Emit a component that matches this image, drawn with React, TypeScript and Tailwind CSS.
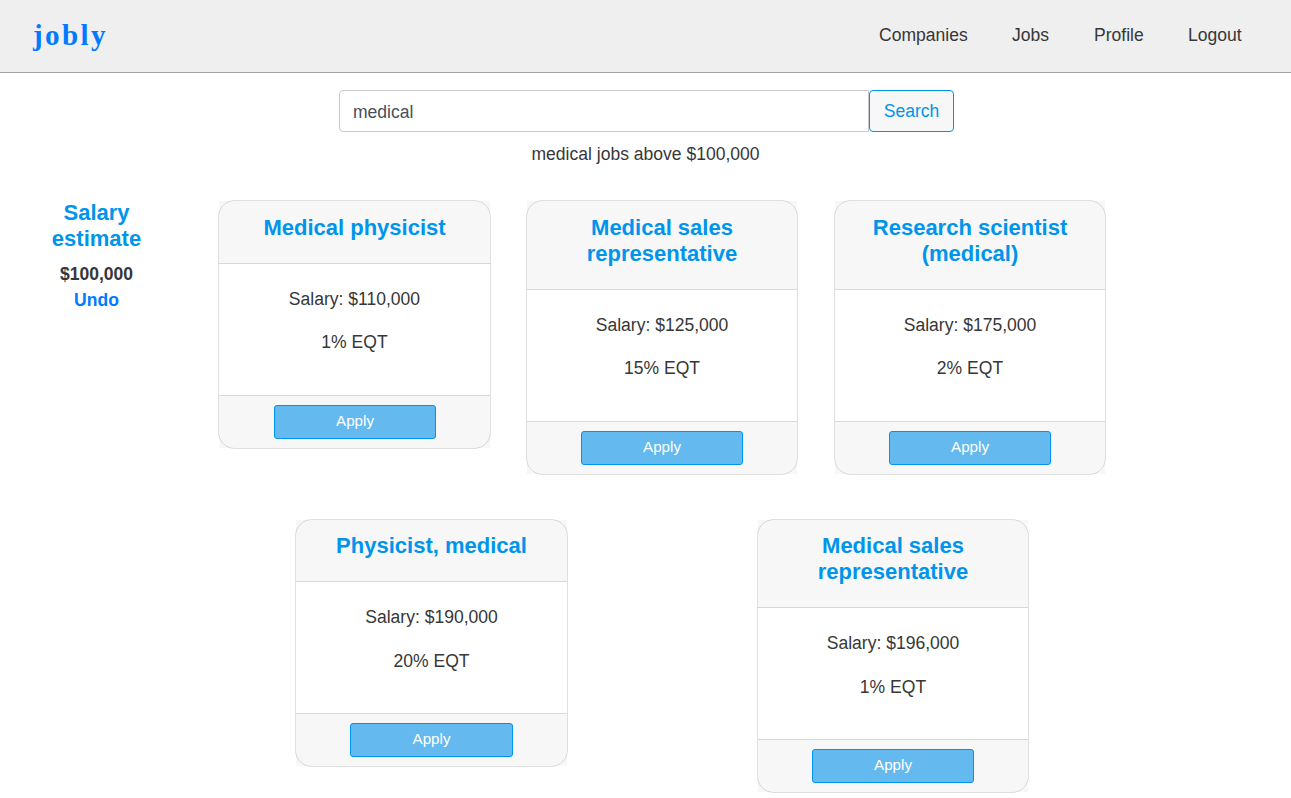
import { useState } from "react";

type Job = { title: string; salary: string; equity: string };

const firstRow: Job[] = [
  { title: "Medical physicist", salary: "$110,000", equity: "1%" },
  { title: "Medical sales representative", salary: "$125,000", equity: "15%" },
  { title: "Research scientist (medical)", salary: "$175,000", equity: "2%" },
];

const secondRow: Job[] = [
  { title: "Physicist, medical", salary: "$190,000", equity: "20%" },
  { title: "Medical sales representative", salary: "$196,000", equity: "1%" },
];

const links = [
  { label: "Companies", className: "w-[89px]" },
  { label: "Jobs", className: "w-[38px]" },
  { label: "Profile", className: "w-[50px]" },
  { label: "Logout", className: "w-[54px]" },
];

function JobCard({
  job,
  width,
  header = "pt-[14px] pb-[22px]",
  body = "space-y-[17px]",
  footer = "px-[54px]",
}: {
  job: Job;
  width: string;
  header?: string;
  body?: string;
  footer?: string;
}) {
  return (
    <article
      className={`${width} flex shrink-0 flex-col rounded-[17px] border border-[#dfdfdf] bg-white text-center`}
    >
      <header className={`border-b border-[#d8d8d8] bg-black/[0.03] px-[22px] ${header}`}>
        <h2 className="text-[22px] leading-[26px] font-bold text-[#0095eb]">{job.title}</h2>
      </header>
      <div className={`h-[131px] pt-[22px] ${body}`}>
        <p>Salary: {job.salary}</p>
        <p>{job.equity} EQT</p>
      </div>
      <footer className={`border-t border-[#d8d8d8] bg-black/[0.03] py-[9px] ${footer}`}>
        <button className="block h-[34px] w-full rounded-[3px] border border-[#0095eb] bg-[#64baee] pb-0.5 text-[15.2px] leading-none text-white">
          Apply
        </button>
      </footer>
    </article>
  );
}

export default function App() {
  const [term, setTerm] = useState("medical");
  return (
    <div className="h-[798px] overflow-hidden bg-white font-['Liberation_Sans',Arial,sans-serif] text-[17.55px] leading-[26px] text-[#373737]">
      <nav className="flex h-[73px] items-start justify-between border-b border-[#a3a3a3] bg-[#efefef] pr-[49px] pl-[33px]">
        <a
          href="#home"
          className="pt-[15px] font-['Liberation_Serif',serif] text-[29px] leading-[40px] font-bold tracking-[2.4px] text-[#007bff]"
        >
          jobly
        </a>
        <div className="flex gap-[44px] pt-[22px]">
          {links.map((link) => (
            <a key={link.label} href="#page" className={`${link.className} whitespace-nowrap`}>
              {link.label}
            </a>
          ))}
        </div>
      </nav>

      <form className="mx-auto mt-[17px] flex w-[615px] translate-x-px" onSubmit={(e) => e.preventDefault()}>
        <input
          aria-label="Search jobs"
          value={term}
          onChange={(e) => setTerm(e.target.value)}
          className="h-[42px] w-[530px] rounded-l-[4px] border border-[#c5cad0] bg-white px-[13px] pt-[2px] text-[#495057] outline-none"
        />
        <button className="h-[42px] w-[85px] rounded-[4px] border border-[#0095eb] bg-[#f7f7f7] text-[#0095eb]">
          Search
        </button>
      </form>
      <p className="mt-[9px] text-center">medical jobs above $100,000</p>

      <main className="mt-[33px] flex">
        <aside className="w-[193px] shrink-0 text-center font-bold">
          <h2 className="mx-auto w-[110px] text-[22px] leading-[26px] text-[#0095eb]">Salary estimate</h2>
          <p className="mt-[9px]">$100,000</p>
          <a href="#undo" className="text-[#007bff]">
            Undo
          </a>
        </aside>
        <section>
          <div className="flex items-start pl-[25px]">
            <JobCard job={firstRow[0]} width="w-[273px]" footer="pr-[54px] pl-[55px]" />
            <div className="ml-[35px] flex items-start gap-[36px]">
              <JobCard job={firstRow[1]} width="w-[272px]" />
              <JobCard job={firstRow[2]} width="w-[272px]" />
            </div>
          </div>
          <div className="mt-[44px] flex items-start gap-[189px] pl-[102px]">
            <JobCard job={secondRow[0]} width="w-[273px]" header="pt-[13px] pb-[22px]" body="space-y-[18px]" />
            <JobCard job={secondRow[1]} width="w-[272px]" header="pt-[13px] pb-[22px]" body="space-y-[18px]" />
          </div>
        </section>
      </main>
    </div>
  );
}
